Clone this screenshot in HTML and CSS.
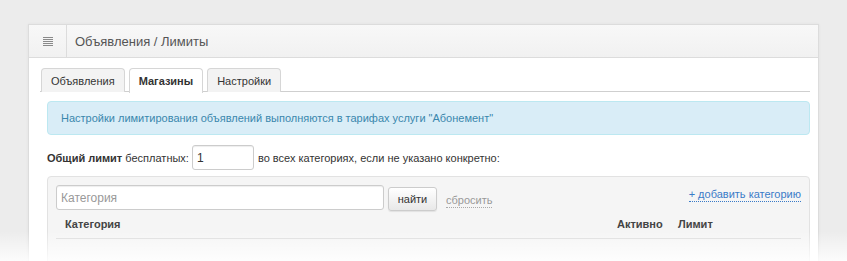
FILE: index.html
```html
<!DOCTYPE html>
<html lang="ru">
<head>
<meta charset="utf-8">
<link rel="stylesheet" href="styles.css">
</head>
<body>
<div class="page">
  <div class="panel">
    <div class="panel-head">
      <div class="head-icon">
        <svg width="10" height="9" viewBox="0 0 10 9"><rect x="0" y="0" width="10" height="1" fill="#8a8a8a"/><rect x="0" y="2" width="10" height="1" fill="#8a8a8a"/><rect x="0" y="4" width="10" height="1" fill="#8a8a8a"/><rect x="0" y="6" width="10" height="1" fill="#8a8a8a"/><rect x="0" y="8" width="10" height="1" fill="#8a8a8a"/></svg>
      </div>
      <div class="head-title">Объявления / Лимиты</div>
    </div>
    <div class="panel-body">
      <ul class="tabs">
        <li class="tab">Объявления</li>
        <li class="tab active">Магазины</li>
        <li class="tab">Настройки</li>
      </ul>
      <div class="tab-content">
        <div class="alert">Настройки лимитирования объявлений выполняются в тарифах услуги "Абонемент"</div>
        <div class="limit-row">
          <b>Общий лимит</b>&nbsp;бесплатных:
          <input class="limit-input" type="text" value="1">
          <span>во всех категориях, если не указано конкретно:</span>
        </div>
        <div class="filter-box">
          <div class="filter-row">
            <input class="search-input" type="text" placeholder="Категория">
            <button class="btn">найти</button>
            <span class="reset">сбросить</span>
            <span class="spacer"></span>
            <span class="add-link">+ добавить категорию</span>
          </div>
          <div class="table-head">
            <div class="th th-cat">Категория</div>
            <div class="th th-act">Активно</div>
            <div class="th th-lim">Лимит</div>
          </div>
        </div>
      </div>
    </div>
  </div>
  <div class="fade"></div>
</div>
</body>
</html>
```

FILE: styles.css
```css
* { box-sizing: border-box; }
html, body { margin: 0; padding: 0; }
body {
  width: 847px;
  height: 261px;
  overflow: hidden;
  background: #ececec;
  font-family: "Liberation Sans", Arial, sans-serif;
  font-size: 11px;
  color: #333;
}
.page {
  position: relative;
  height: 261px;
  padding: 24px 0 0 28px;
  overflow: hidden;
}
.panel {
  width: 791px;
  height: 237px;
  overflow: hidden;
  background: #fff;
  border: 1px solid #dcdcdc;
  border-bottom: none;
  box-shadow: 0 0 3px rgba(0,0,0,0.05);
}
.panel-head {
  display: flex;
  height: 33px;
  background: linear-gradient(#f8f8f8, #f1f1f1);
  border-bottom: 1px solid #dcdcdc;
}
.head-icon {
  width: 38px;
  border-right: 1px solid #dcdcdc;
  display: flex;
  align-items: center;
  justify-content: center;
  padding-top: 1px;
}
.head-title {
  display: flex;
  align-items: center;
  padding-left: 8px;
  font-size: 13px;
  color: #555;
}
.panel-body {
  padding: 10px 8px 0 11px;
}
.tabs {
  list-style: none;
  margin: 0;
  padding: 0 0 0 1px;
  display: flex;
  gap: 4px;
  border-bottom: 1px solid #cfcfcf;
  height: 24px;
}
.tab {
  height: 24px;
  padding: 0 9px;
  display: flex;
  align-items: center;
  background: #f3f3f3;
  border: 1px solid #d6d6d6;
  border-bottom: none;
  border-radius: 4px 4px 0 0;
  color: #333;
}
.tab.active {
  background: #fff;
  font-weight: bold;
  height: 25px;
  color: #333;
}
.tab-content {
  padding: 9px 0 0 7px;
}
.alert {
  height: 34px;
  background: #d9edf7;
  border: 1px solid #bce8f1;
  border-radius: 4px;
  color: #3a87ad;
  padding: 0 13px;
  display: flex;
  align-items: center;
}
.limit-row {
  display: flex;
  align-items: center;
  margin-top: 10px;
  height: 25px;
  color: #333;
}
.limit-input {
  width: 62px;
  height: 25px;
  margin: 0 4px 0 3px;
  border: 1px solid #ccc;
  border-radius: 3px;
  font: 12px "Liberation Sans", Arial, sans-serif;
  padding: 0 4px;
  color: #333;
  box-shadow: inset 0 1px 1px rgba(0,0,0,0.07);
}
.filter-box {
  margin-top: 6px;
  background: #f5f5f5;
  border: 1px solid #e2e2e2;
  border-radius: 4px;
  padding: 8px 8px 0 8px;
  height: 100px;
}
.filter-row {
  display: flex;
  align-items: center;
  height: 25px;
}
.search-input {
  width: 328px;
  height: 25px;
  border: 1px solid #ccc;
  border-radius: 3px;
  background: #fff;
  font: 12px "Liberation Sans", Arial, sans-serif;
  padding: 0 4px;
  box-shadow: inset 0 1px 1px rgba(0,0,0,0.07);
}
.search-input::placeholder { color: #999; }
.btn {
  margin-left: 4px;
  width: 49px;
  height: 24px;
  margin-top: 2px;
  border: 1px solid #ccc;
  border-radius: 3px;
  background: linear-gradient(#fff, #e8e8e8);
  font: 11px "Liberation Sans", Arial, sans-serif;
  color: #333;
  padding: 0;
  box-shadow: 0 1px 1px rgba(0,0,0,0.08);
}
.reset {
  margin-left: 9px;
  color: #999;
  border-bottom: 1px dotted #aaa;
  line-height: 14px;
  margin-top: 5px;
}
.spacer { flex: 1; }
.add-link {
  color: #3a7bc8;
  border-bottom: 1px dotted #3a7bc8;
  line-height: 14px;
  margin-top: -6px;
}
.table-head {
  display: flex;
  align-items: center;
  height: 29px;
  border-bottom: 1px solid #dcdcdc;
  font-weight: bold;
  color: #444;
}
.th-cat { flex: 1; padding-left: 9px; }
.th-act { width: 61px; }
.th-lim { width: 123px; }
.fade {
  position: absolute;
  left: 0;
  right: 0;
  bottom: 0;
  height: 30px;
  background: linear-gradient(rgba(255,255,255,0), rgba(255,255,255,0.85));
  pointer-events: none;
}
```
